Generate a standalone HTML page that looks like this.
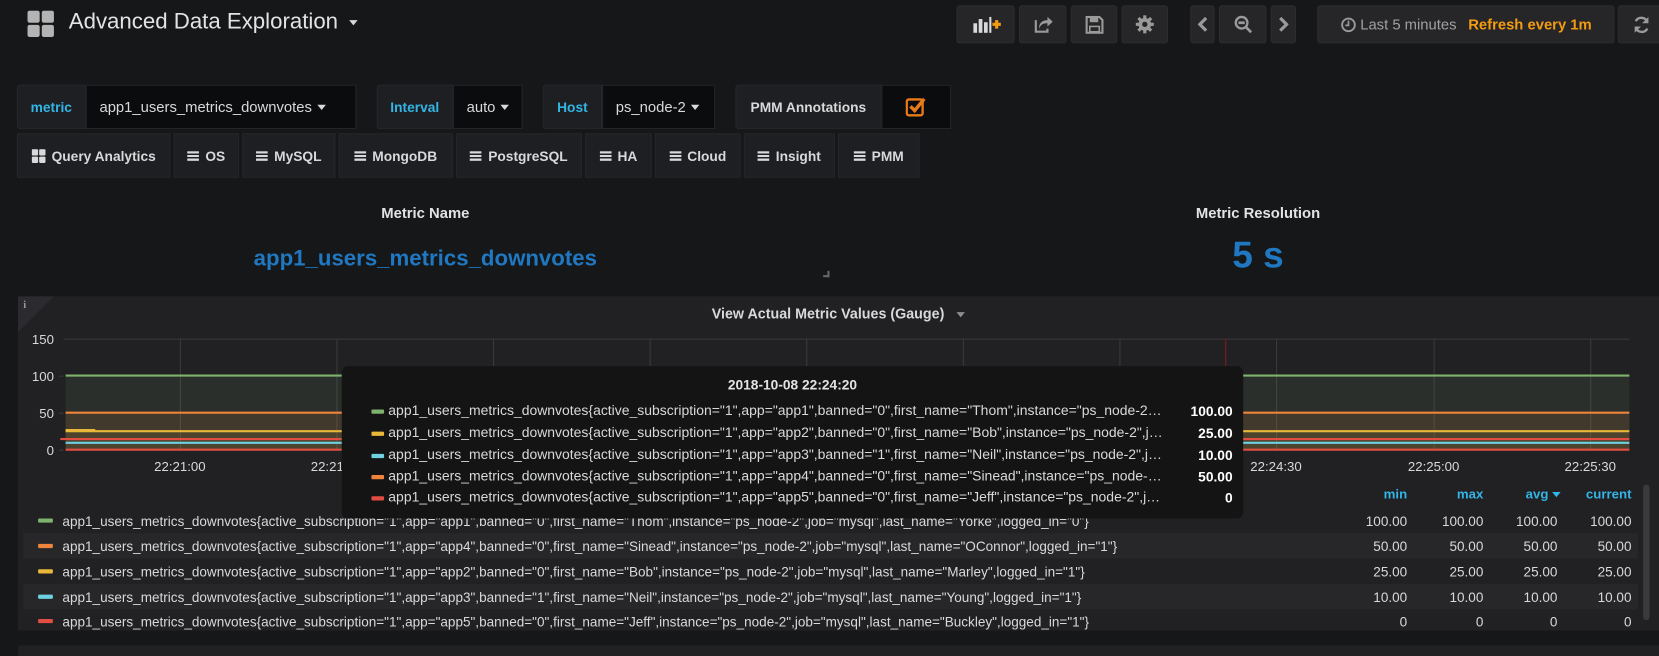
<!DOCTYPE html>
<html><head><meta charset="utf-8">
<style>
*{box-sizing:border-box;margin:0;padding:0}
html,body{width:1659px;height:656px;overflow:hidden;background:#161719}
body{font-family:"Liberation Sans",sans-serif;color:#d8d9da}
#w{position:absolute;left:0;top:0;width:1568px;height:620px;transform:scale(1.05804);transform-origin:0 0;background:#161719}
.a{position:absolute}
.btn{position:absolute;background:#262628;border:1px solid #2c2c2f;border-radius:3px;top:5px;height:36px;display:flex;align-items:center;justify-content:center}
.lbl{position:absolute;top:80px;height:42px;background:#1e1f22;border:1px solid #25262a;border-radius:3px 0 0 3px;color:#33b5e5;font-size:13px;font-weight:bold;display:flex;align-items:center;justify-content:center}
.val{position:absolute;top:80px;height:42px;background:#0b0c0e;border:1px solid #25262a;font-size:14px;color:#d8d9da;display:flex;align-items:center;padding-left:12px}
.car{display:inline-block;width:0;height:0;border-left:4px solid transparent;border-right:4px solid transparent;border-top:5px solid #d8d9da;margin-left:5px;vertical-align:middle}
.lk{position:absolute;top:126px;height:42px;background:#1e1f22;border:1px solid #25262a;font-size:13px;font-weight:bold;color:#d8d9da;display:flex;align-items:center;justify-content:center;white-space:nowrap}
.bars{display:inline-block;width:11px;height:9px;margin-right:6px;background:linear-gradient(#d8d9da 0 2px,transparent 2px 3.5px,#d8d9da 3.5px 5.5px,transparent 5.5px 7px,#d8d9da 7px 9px)}
.lg{position:absolute;left:22px;width:1526px;height:24px;font-size:12.8px;color:#d8d9da;white-space:nowrap}
.lg .sw{position:absolute;left:14px;top:10px;width:14px;height:4px;border-radius:1px}
.lg .t{position:absolute;left:37px;top:5px}
.lg .n{position:absolute;top:5px;width:60px;text-align:right}
.tt{position:absolute;left:28px;width:750px;font-size:13.2px;white-space:nowrap;overflow:hidden;text-overflow:ellipsis;color:#d8d9da}
.tt i{display:inline-block;width:12px;height:4px;border-radius:1px;vertical-align:middle;margin-right:4px}
.tv{position:absolute;right:10px;font-size:13px;font-weight:bold;color:#fff;text-align:right}
</style></head><body><div id="w">

<svg class="a" style="left:26px;top:10px" width="25" height="25" viewBox="0 0 25 25"><rect x="0" y="0" width="11.5" height="11.5" rx="2" fill="#b4b4b4"/><rect x="13.5" y="0" width="11.5" height="11.5" rx="2" fill="#b4b4b4"/><rect x="0" y="13.5" width="11.5" height="11.5" rx="2" fill="#b4b4b4"/><rect x="13.5" y="13.5" width="11.5" height="11.5" rx="2" fill="#b4b4b4"/></svg>
<div class="a" style="left:65px;top:9px;font-size:21px;color:#e3e3e3">Advanced Data Exploration <span class="car" style="border-top-color:#d8d9da"></span></div>

<div class="btn" style="left:904px;width:55px"><svg width="28" height="20" viewBox="0 0 28 20"><rect x="2" y="9" width="3.5" height="9" fill="#d8d9da"/><rect x="7" y="5" width="3.5" height="13" fill="#d8d9da"/><rect x="12" y="8" width="3.5" height="10" fill="#d8d9da"/><rect x="17" y="3" width="2" height="15" fill="#d8d9da"/><path d="M20 10h8M24 6v8" stroke="#f39c12" stroke-width="3"/></svg></div>
<div class="btn" style="left:963px;width:45px"><svg width="18" height="18" viewBox="0 0 18 18"><path d="M2 5v11h11v-3" fill="none" stroke="#9a9a9a" stroke-width="2"/><path d="M5 13c0-6 4-8 8-8V2l5 4.5-5 4.5V8c-4 0-6 1-8 5z" fill="#9a9a9a"/></svg></div>
<div class="btn" style="left:1012px;width:44px"><svg width="17" height="17" viewBox="0 0 17 17"><path d="M1 1h12l3 3v12H1z" fill="none" stroke="#9a9a9a" stroke-width="2"/><rect x="4" y="2" width="8" height="4" fill="#9a9a9a"/><rect x="4" y="10" width="9" height="5" fill="none" stroke="#9a9a9a" stroke-width="1.5"/></svg></div>
<div class="btn" style="left:1060px;width:44px"><svg width="18" height="18" viewBox="0 0 18 18"><g fill="#9a9a9a"><circle cx="9" cy="9" r="6"/><rect x="7.5" y="0.5" width="3" height="17"/><rect x="0.5" y="7.5" width="17" height="3"/><rect x="7.5" y="0.5" width="3" height="17" transform="rotate(45 9 9)"/><rect x="7.5" y="0.5" width="3" height="17" transform="rotate(-45 9 9)"/></g><circle cx="9" cy="9" r="2.5" fill="#262628"/></svg></div>
<div class="btn" style="left:1125px;width:23px"><svg width="10" height="16" viewBox="0 0 10 16"><path d="M8 2L2 8l6 6" fill="none" stroke="#9a9a9a" stroke-width="3"/></svg></div>
<div class="btn" style="left:1152px;width:45px"><svg width="18" height="18" viewBox="0 0 18 18"><circle cx="7.5" cy="7.5" r="5.5" fill="none" stroke="#9a9a9a" stroke-width="2.2"/><path d="M4.5 7.5h6M11.5 11.5l5 5" stroke="#9a9a9a" stroke-width="2.5"/></svg></div>
<div class="btn" style="left:1201px;width:24px"><svg width="10" height="16" viewBox="0 0 10 16"><path d="M2 2l6 6-6 6" fill="none" stroke="#9a9a9a" stroke-width="3"/></svg></div>
<div class="btn" style="left:1245px;width:281px;font-size:14px"><svg width="15" height="15" viewBox="0 0 15 15" style="margin-right:4px"><circle cx="7.5" cy="7.5" r="6" fill="none" stroke="#9a9a9a" stroke-width="1.8"/><path d="M7.5 3.5v4.5H4.5" fill="none" stroke="#9a9a9a" stroke-width="1.6"/></svg><span style="color:#9fa0a2">Last 5 minutes</span><span style="color:#f39c12;font-weight:bold;margin-left:11px">Refresh every 1m</span></div>
<div class="btn" style="left:1529px;width:45px"><svg width="17" height="17" viewBox="0 0 17 17"><path d="M14 6A6 6 0 0 0 3 5M3 11a6 6 0 0 0 11 1" fill="none" stroke="#9a9a9a" stroke-width="2.2"/><path d="M15 1v6h-6zM2 16v-6h6z" fill="#9a9a9a"/></svg></div>

<div class="lbl" style="left:16px;width:65px">metric</div>
<div class="val" style="left:81px;width:256px">app1_users_metrics_downvotes<span class="car"></span></div>
<div class="lbl" style="left:356px;width:72px">Interval</div>
<div class="val" style="left:428px;width:66px">auto<span class="car"></span></div>
<div class="lbl" style="left:513px;width:56px">Host</div>
<div class="val" style="left:569px;width:107px">ps_node-2<span class="car"></span></div>
<div class="lbl" style="left:695px;width:138px;color:#d8d9da">PMM Annotations</div>
<div class="val" style="left:833px;width:66px;justify-content:center;padding:0"><svg width="20" height="20" viewBox="0 0 20 20"><rect x="1" y="3" width="15" height="15" rx="2" fill="none" stroke="#eb7b18" stroke-width="2.2"/><path d="M4.5 9.5l4 4 9-11" fill="none" stroke="#eb7b18" stroke-width="3.2"/></svg></div>

<div class="lk" style="left:16px;width:145px"><svg width="13" height="13" viewBox="0 0 13 13" style="margin-right:6px"><g fill="#d8d9da"><rect width="6" height="6" rx="1"/><rect x="7" width="6" height="6" rx="1"/><rect y="7" width="6" height="6" rx="1"/><rect x="7" y="7" width="6" height="6" rx="1"/></g></svg>Query Analytics</div>
<div class="lk" style="left:164px;width:62px"><span class="bars"></span>OS</div>
<div class="lk" style="left:229px;width:88px"><span class="bars"></span>MySQL</div>
<div class="lk" style="left:320px;width:108px"><span class="bars"></span>MongoDB</div>
<div class="lk" style="left:431px;width:119px"><span class="bars"></span>PostgreSQL</div>
<div class="lk" style="left:553px;width:63px"><span class="bars"></span>HA</div>
<div class="lk" style="left:619px;width:81px"><span class="bars"></span>Cloud</div>
<div class="lk" style="left:703px;width:86px"><span class="bars"></span>Insight</div>
<div class="lk" style="left:792px;width:77px"><span class="bars"></span>PMM</div>

<div class="a" style="left:17px;width:770px;top:193px;text-align:center;font-size:14px;font-weight:bold;color:#e3e3e3">Metric Name</div>
<div class="a" style="left:17px;width:770px;top:233px;text-align:center;font-size:21px;font-weight:bold;color:#1f78c1">app1_users_metrics_downvotes</div>
<div class="a" style="left:778px;top:256px;width:6px;height:6px;border-right:2px solid #666;border-bottom:2px solid #666"></div>
<div class="a" style="left:800px;width:778px;top:193px;text-align:center;font-size:14px;font-weight:bold;color:#e3e3e3">Metric Resolution</div>
<div class="a" style="left:800px;width:778px;top:222px;text-align:center;font-size:35px;font-weight:bold;color:#1f78c1">5 s</div>

<div class="a" style="left:17px;top:280px;width:1551px;height:316px;background:#212124"></div>
<svg class="a" style="left:17px;top:280px" width="34" height="34"><path d="M0 0h34L0 34z" fill="#2b2b2f"/><text x="5" y="11" font-size="10" font-weight="bold" fill="#9a9a9a" font-family="Liberation Serif">i</text></svg>
<div class="a" style="left:17px;width:1551px;top:289px;text-align:center;font-size:13.5px;font-weight:bold;color:#d8d9da">View Actual Metric Values (Gauge) <span class="car" style="border-top-color:#8e8e8e;margin-left:8px"></span></div>

<svg class="a" style="left:0;top:300px" width="1568" height="160" viewBox="0 300 1568 160" font-family="Liberation Sans" font-size="12.5" fill="#d8d9da">
<g stroke="#3a3a3d" stroke-width="1">
<line x1="60" y1="320.5" x2="1540" y2="320.5"/>
<line x1="56" y1="355.5" x2="60" y2="355.5"/><line x1="56" y1="390.5" x2="60" y2="390.5"/><line x1="56" y1="425.5" x2="60" y2="425.5"/>
<line x1="170.5" y1="320" x2="170.5" y2="425"/><line x1="318.5" y1="320" x2="318.5" y2="425"/><line x1="466.5" y1="320" x2="466.5" y2="425"/><line x1="614.5" y1="320" x2="614.5" y2="425"/><line x1="762.5" y1="320" x2="762.5" y2="425"/><line x1="910.5" y1="320" x2="910.5" y2="425"/><line x1="1058.5" y1="320" x2="1058.5" y2="425"/><line x1="1206.5" y1="320" x2="1206.5" y2="425"/><line x1="1355.5" y1="320" x2="1355.5" y2="425"/><line x1="1503.5" y1="320" x2="1503.5" y2="425"/>
</g>
<rect x="62" y="355" width="1478" height="70" fill="#7eb26d" fill-opacity="0.1"/>
<rect x="62" y="390" width="1478" height="35" fill="#ef843c" fill-opacity="0.12"/>
<rect x="62" y="408" width="1478" height="17" fill="#eab839" fill-opacity="0.08"/>
<line x1="1158.5" y1="320" x2="1158.5" y2="425" stroke="#8b1a1a" stroke-width="1"/>
<line x1="62" y1="355" x2="1540" y2="355" stroke="#7eb26d" stroke-width="2"/>
<line x1="62" y1="390" x2="1540" y2="390" stroke="#ef843c" stroke-width="2"/>
<line x1="62" y1="407.5" x2="1540" y2="407.5" stroke="#eab839" stroke-width="2"/>
<line x1="62" y1="406.5" x2="90" y2="406.5" stroke="#eab839" stroke-width="2"/>
<line x1="57" y1="415" x2="1540" y2="415" stroke="#e24d42" stroke-width="2"/>
<line x1="62" y1="418.5" x2="1540" y2="418.5" stroke="#6ed0e0" stroke-width="2"/>
<line x1="62" y1="425" x2="1540" y2="425" stroke="#e24d42" stroke-width="2"/>
<g text-anchor="end"><text x="51" y="325">150</text><text x="51" y="360">100</text><text x="51" y="395">50</text><text x="51" y="430">0</text></g>
<g text-anchor="middle"><text x="170" y="445">22:21:00</text><text x="318" y="445">22:21:30</text><text x="1206" y="445">22:24:30</text><text x="1355" y="445">22:25:00</text><text x="1503" y="445">22:25:30</text></g>
</svg>

<div class="a" style="top:460px;left:0;width:1568px;font-size:12.5px;font-weight:bold;color:#33b5e5">
<span class="a" style="left:1270px;width:60px;text-align:right">min</span>
<span class="a" style="left:1342px;width:60px;text-align:right">max</span>
<span class="a" style="left:1402px;width:73px;text-align:right">avg <span style="display:inline-block;border-left:4px solid transparent;border-right:4px solid transparent;border-top:5px solid #33b5e5;vertical-align:middle"></span></span>
<span class="a" style="left:1482px;width:60px;text-align:right">current</span>
</div>
<div class="a" style="left:1553px;top:458px;width:6px;height:128px;background:#3a3a3d;border-radius:3px"></div>

<div class="lg" style="top:480px"><span class="sw" style="background:#7eb26d"></span><span class="t">app1_users_metrics_downvotes{active_subscription="1",app="app1",banned="0",first_name="Thom",instance="ps_node-2",job="mysql",last_name="Yorke",logged_in="0"}</span><span class="n" style="left:1248px">100.00</span><span class="n" style="left:1320px">100.00</span><span class="n" style="left:1390px">100.00</span><span class="n" style="left:1460px">100.00</span></div>
<div class="lg" style="top:504px;background:#27272a"><span class="sw" style="background:#ef843c"></span><span class="t">app1_users_metrics_downvotes{active_subscription="1",app="app4",banned="0",first_name="Sinead",instance="ps_node-2",job="mysql",last_name="OConnor",logged_in="1"}</span><span class="n" style="left:1248px">50.00</span><span class="n" style="left:1320px">50.00</span><span class="n" style="left:1390px">50.00</span><span class="n" style="left:1460px">50.00</span></div>
<div class="lg" style="top:528px"><span class="sw" style="background:#eab839"></span><span class="t">app1_users_metrics_downvotes{active_subscription="1",app="app2",banned="0",first_name="Bob",instance="ps_node-2",job="mysql",last_name="Marley",logged_in="1"}</span><span class="n" style="left:1248px">25.00</span><span class="n" style="left:1320px">25.00</span><span class="n" style="left:1390px">25.00</span><span class="n" style="left:1460px">25.00</span></div>
<div class="lg" style="top:552px;background:#27272a"><span class="sw" style="background:#6ed0e0"></span><span class="t">app1_users_metrics_downvotes{active_subscription="1",app="app3",banned="1",first_name="Neil",instance="ps_node-2",job="mysql",last_name="Young",logged_in="1"}</span><span class="n" style="left:1248px">10.00</span><span class="n" style="left:1320px">10.00</span><span class="n" style="left:1390px">10.00</span><span class="n" style="left:1460px">10.00</span></div>
<div class="lg" style="top:575px"><span class="sw" style="background:#e24d42"></span><span class="t">app1_users_metrics_downvotes{active_subscription="1",app="app5",banned="0",first_name="Jeff",instance="ps_node-2",job="mysql",last_name="Buckley",logged_in="1"}</span><span class="n" style="left:1248px">0</span><span class="n" style="left:1320px">0</span><span class="n" style="left:1390px">0</span><span class="n" style="left:1460px">0</span></div>

<div class="a" style="left:17px;top:610px;width:1551px;height:10px;background:#212124"></div>

<div class="a" style="left:323px;top:346px;width:852px;height:144px;background:#141414;border-radius:6px">
<div class="a" style="left:0;width:852px;top:10px;text-align:center;font-size:13px;font-weight:bold;color:#e3e3e3">2018-10-08 22:24:20</div>
<div class="tt" style="top:34px"><i style="background:#7eb26d"></i>app1_users_metrics_downvotes{active_subscription="1",app="app1",banned="0",first_name="Thom",instance="ps_node-2",job="mysql"}</div><div class="tv" style="top:35px">100.00</div>
<div class="tt" style="top:55px"><i style="background:#eab839"></i>app1_users_metrics_downvotes{active_subscription="1",app="app2",banned="0",first_name="Bob",instance="ps_node-2",job="mysql"}</div><div class="tv" style="top:56px">25.00</div>
<div class="tt" style="top:76px"><i style="background:#6ed0e0"></i>app1_users_metrics_downvotes{active_subscription="1",app="app3",banned="1",first_name="Neil",instance="ps_node-2",job="mysql"}</div><div class="tv" style="top:77px">10.00</div>
<div class="tt" style="top:96px"><i style="background:#ef843c"></i>app1_users_metrics_downvotes{active_subscription="1",app="app4",banned="0",first_name="Sinead",instance="ps_node-2",job="mysql"}</div><div class="tv" style="top:97px">50.00</div>
<div class="tt" style="top:116px"><i style="background:#e24d42"></i>app1_users_metrics_downvotes{active_subscription="1",app="app5",banned="0",first_name="Jeff",instance="ps_node-2",job="mysql"}</div><div class="tv" style="top:117px">0</div>
</div>

</div></body></html>
